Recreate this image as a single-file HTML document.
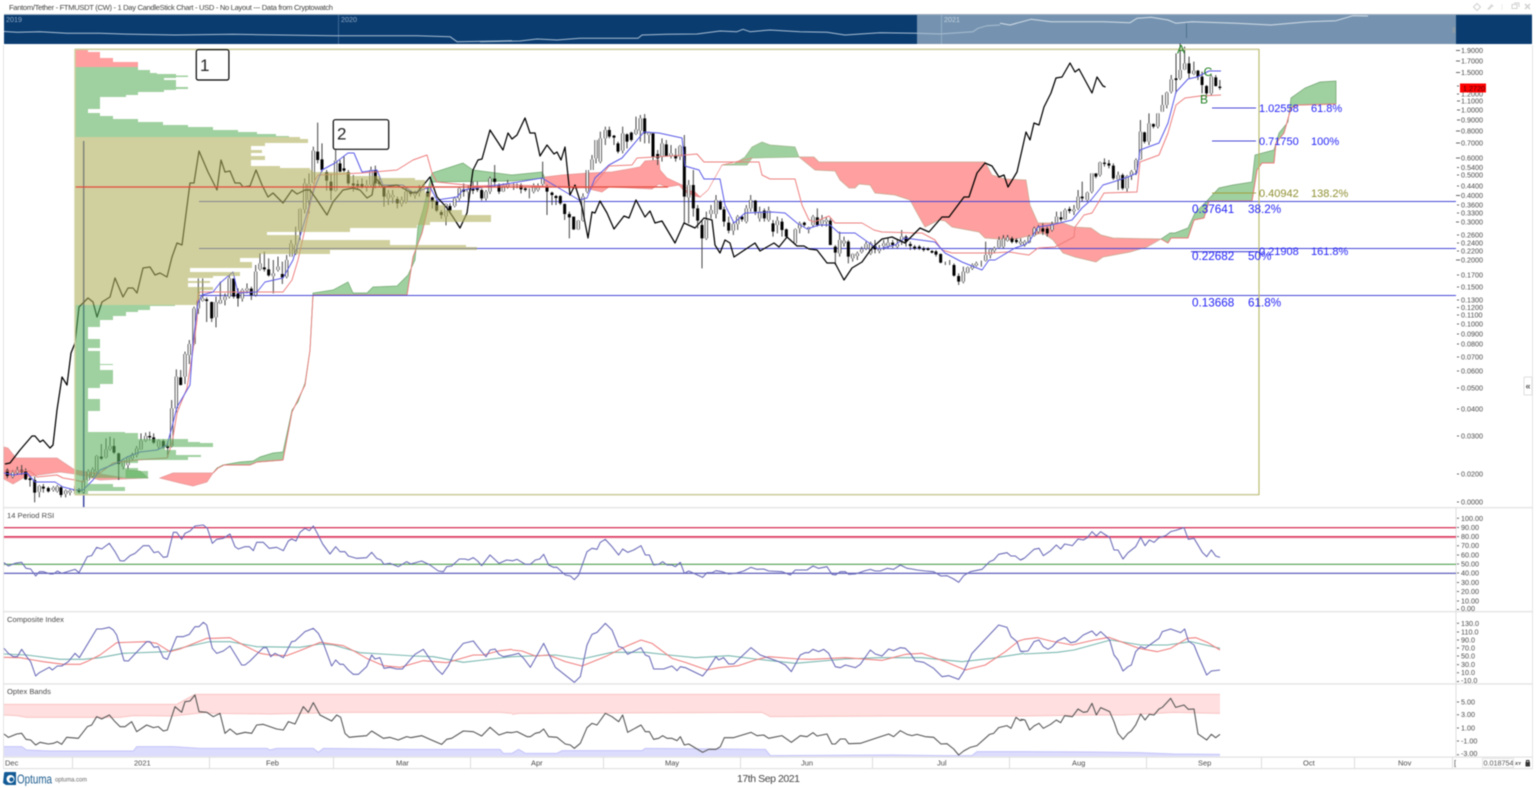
<!DOCTYPE html>
<html><head><meta charset="utf-8"><title>FTMUSDT</title>
<style>
html,body{margin:0;padding:0;background:#fff;overflow:hidden}
svg{display:block;font-family:"Liberation Sans",sans-serif}
#c{filter:blur(.4px)}
.a{font-size:7.2px;fill:#4a4a4a}
.m{font-size:7.5px;fill:#4a4a4a}
.f{font-size:11px;fill:#1f1ff5}
.g{font-size:11.7px;fill:#1f1ff5}
.o{font-size:11px;fill:#8e8e30}
.l{font-size:12px;fill:#1c7c1c;text-anchor:middle}
.n{fill:none;stroke-linejoin:round}
</style></head><body>
<svg id="c" width="1536" height="788" viewBox="0 0 1536 788" xmlns="http://www.w3.org/2000/svg">
<rect width="1536" height="788" fill="#fff"/>
<text x="9" y="10" font-size="7.6" fill="#444" textLength="324" lengthAdjust="spacing">Fantom/Tether - FTMUSDT (CW) - 1 Day CandleStick Chart - USD - No Layout --- Data from Cryptowatch</text>
<g fill="none" stroke="#d0d0d0" stroke-width="1"><path d="M1477 3.5l3.5 3.5-3.5 3.5-3.5-3.5z"/><path d="M1512 4.5h5v4h-5zM1514 3h5v4" /><path d="M1525 4l5 5M1530 4l-5 5" stroke-width="1.5"/></g>
<path d="M1487 9l3-3 1-2 3 2-2 1-3 3z" fill="#d8d8d8"/><path d="M1502 4v6" stroke="#eee"/>

<!-- navigator -->
<rect x="4" y="15" width="913" height="29" fill="#0a3c70"/><rect x="917" y="15" width="539" height="29" fill="#7593b0"/><rect x="1456" y="15" width="76" height="29" fill="#0a3c70"/>
<rect x="4" y="14" width="1528" height="1" fill="#9fb0c0"/>
<path d="M338.5 15V44" stroke="#3d6796"/><path d="M941.5 15V44" stroke="#93abc2"/>
<text x="6" y="22" font-size="7.2" fill="#8fa8c4">2019</text><text x="341" y="22" font-size="7.2" fill="#8fa8c4">2020</text><text x="944" y="22" font-size="7.2" fill="#c4d2e0">2021</text>
<g class="n" stroke="#a9bed2" stroke-width="1"><path d="M4 31.5L17 32.3L40 31.7L67 33.3L100 33.3L133 34.3L175 35L233 34.3L333 35.7L367 35.7L417 35.7L450 36.7L457 41.7L512 40.7"/>
<path d="M480 41.7L520 41L537 39L557 40L580 38.3L638 38.3L642 35L667 34.3L697 34L720 31L737 31.7L743 29.3L750 31.7L770 30L800 31.7L827 32.3L845 35L880 32.7L917 33.3L940 34L973 31.7L978 28.3L987 25.7L1000 25"/>
<path stroke="#d3dde7" d="M1000 23.3L1010 25L1031 19.3L1051 21.7L1103 21.7L1130 22.7L1137 18.3L1151 17.3L1168 20L1176 23.3L1192 21.7L1236 23.3L1271 25L1308 21.7L1336 20.7L1353 15.7L1368 16"/></g>
<path d="M1186.5 23V38" stroke="#4f6f90"/>
<rect x="1452.5" y="27" width="3" height="6" fill="#8a9aa8"/>

<!-- frame -->
<rect x="3" y="45" width="1" height="724" fill="#e4e4e4"/>
<rect x="1532" y="45" width="1" height="724" fill="#e4e4e4"/>
<rect x="1524" y="377" width="8" height="18" rx="1" fill="#fff" stroke="#ddd"/>
<text x="1525.5" y="389" font-size="9" fill="#555" font-weight="bold">«</text>

<!-- clouds -->
<g stroke="#9ab88a" stroke-width=".7">
<path fill="#ff9f9f" stroke="#e0a0a0" d="M4 447L8 448L16 458L57 458L75 470L100 474L125 478L148 478L100 480L75 474L60 472L25 477L13 484L4 479Z"/>
<path fill="#9fd09f" d="M126 470L140 471L148 478L126 478Z"/>
<path fill="#ff9f9f" stroke="#e89898" d="M160 478L173 473L213 473L207 482L193 486L180 483Z"/>
<path fill="#9fd09f" stroke="#6fa86f" d="M213 473L217 468L223 465L240 462L253 461L260 457L273 453L283 452L292 410L298 402L305 383L310 350L313 293L333 290L348 282L353 293L367 293L373 287L397 286L408 275L415 260L418 227L423 210L432 173L463 163L473 170L512 175L542 172L545 178L512 181L432 182L428 208L422 233L413 257L407 295L313 295L310 350L305 385L292 412L283 460L257 462L250 465L224 465L218 468Z"/>
<path class="n" stroke="#e87a7a" stroke-width=".9" d="M213 473L218 468L224 465L250 465L257 462L283 460L292 412L305 385L310 350L313 295L407 295L413 257L422 233L428 208L432 182"/>
<path fill="#ff9f9f" stroke="#e89090" d="M545 177L562 175L589 173L612 172L640 167L645 161L659 160L660 170L667 178L682 185L685 190L695 192L700 197L695 196L685 192L679 185L667 187L659 184L652 189L609 187L602 192L585 188L545 185Z"/>
<path fill="#9fd09f" d="M722 165L734 164L745 157L752 147L762 142L770 145L795 147L799 157L752 158L747 165Z"/>
<path class="n" stroke="#f08080" d="M682 185L700 197L708 190L722 165L752 158"/>
<path fill="#ff9f9f" stroke="#c8a890" d="M799 157L814 157L819 162L985 162L992 175L1005 179L1026 180L1030 205L1038 223L1063 223L1074 227L1091 228L1101 235L1113 238L1161 239L1147 247L1130 252L1103 257L1096 262L1075 257L1063 253L1053 240L1043 233L1024 237L1012 240L985 238L979 232L952 227L945 221L939 220L925 227L917 213L910 200L895 195L875 193L870 185L859 184L855 188L849 188L840 180L835 171L815 170Z"/>
<path fill="#9fd09f" stroke="#70a070" d="M1161 239L1170 233L1175 233L1188 228L1195 213L1205 203L1219 188L1233 185L1252 182L1255 155L1274 150L1279 133L1288 122L1291 98L1305 88L1320 82L1336 81L1336 104L1298 105L1291 108L1284 133L1276 143L1274 163L1262 163L1257 170L1252 201L1209 201L1204 218L1194 220L1188 238L1171 238L1168 243Z"/>
<path class="n" stroke="#ee7a7a" stroke-width="1" d="M1161 239L1168 243L1171 238L1188 238L1194 220L1204 218L1209 201L1252 201L1257 170L1262 163L1274 163L1276 143L1284 133L1291 108L1298 105L1336 104"/>
</g>

<!-- horizontal levels -->
<g stroke="#4646d8" stroke-width="1.1" fill="none"><path d="M199 201.5H1456M199 248.5H1456M199 295.5H1456"/><path d="M1212 108H1256M1212 141H1256M1191 251.7H1258"/></g>
<path d="M1212 193H1256" stroke="#a0a040"/>

<!-- vertical line -->
<path d="M83.7 141V507" stroke="#3a46a0" stroke-width="1.5"/>

<!-- candles group A (zoom 3 space) -->
<g transform="translate(0,260) scale(.33333)" fill="none">
<path stroke="#444" stroke-width="3" d="M22 625V655M38 630V655M52 620V645M65 615V645M77 625V660M90 650V680M104 650V727M118 675V712M130 672V698M145 680V698M160 678V695M172 675V698M183 678V712M197 688V712M210 688V706M224 678V702M237 684V700M250 660V700M265 628V662M278 622V652M290 585V640M304 552V600M318 535V595M330 530V572M342 535V582M356 578V660M370 595V628M384 588V628M397 578V602M410 558V592M423 520V570M437 518V546M449 515V542M461 520V552M476 538V566M490 538V566M503 545V592M515 420V562M529 328V457M542 330V376M555 275V372M568 240V312M582 140V256M595 55V162M608 55V125M620 112V186M635 125V186M648 110V202M661 65V132M675 100V136M688 45V115M701 55V116M714 85V140M727 85V125M741 70V100M754 80V120M767 15V110M780 -20V32M793 -25V35M806 -5V50M820 0V100M834 -10V35M847 5V72M860 -15V55"/>
<path stroke="#000" stroke-width="9" d="M22 630V648M65 630V636M77 632V658M90 655V660M104 660V698M130 680V686M145 684V694M183 682V705M224 688V692M237 688V696M304 590V596M342 558V578M356 580V612M449 528V532M461 532V548M490 543V562M503 558V564M542 352V375M620 118V123M635 126V175M701 56V110M714 100V115M754 86V105M793 22V28M806 28V46M847 42V52"/>
<path stroke="#444" stroke-width="10" d="M38 637V650M52 630V638M118 678V696M160 683V690M172 680V694M197 692V702M210 692V698M250 662V696M265 634V660M278 628V648M290 588V634M318 568V592M330 558V568M370 600V620M384 592V615M397 584V596M410 565V585M423 542V568M437 528V542M476 542V560M515 445V558M529 350V445M555 282V350M568 252V285M582 145V252M595 122V145M608 115V122M648 126V172M661 120V130M675 110V120M688 55V110M727 90V115M741 85V92M767 35V105M780 10V28M820 40V48M834 20V30M860 0V50"/>
<path stroke="#fff" stroke-width="5" d="M38 637V650M52 630V638M118 678V696M160 683V690M172 680V694M197 692V702M210 692V698M250 662V696M265 634V660M278 628V648M290 588V634M318 568V592M330 558V568M370 600V620M384 592V615M397 584V596M410 565V585M423 542V568M437 528V542M476 542V560M515 445V558M529 350V445M555 282V350M568 252V285M582 145V252M595 122V145M608 115V122M648 126V172M661 120V130M675 110V120M688 55V110M727 90V115M741 85V92M767 35V105M780 10V28M820 40V48M834 20V30M860 0V50"/>
</g>

<!-- candles group B (zoom 1 space) -->
<g transform="scale(.33333)" fill="none">
<path stroke="#444" stroke-width="3" d="M873 720V770M887 680V765M900 625V720M914 535V640M927 520V640M940 440V550M953 368V490M966 430V515M980 510V572M993 520V600M1007 450V575M1020 480V516M1032 470V516M1045 510V556M1060 525V575M1073 540V570M1086 535V565M1100 540V575M1113 500V560M1126 497V565M1138 535V560M1152 555V620M1165 570V615M1178 570V610M1192 590V625M1205 590V620M1218 560V610M1232 570V590M1245 572V596M1258 555V590M1283 560V592M1297 590V626M1310 600V636M1324 630V656M1338 610V676M1350 610V640M1364 590V622M1378 560V602M1391 550V590M1405 555V602M1419 545V582M1432 545V576M1445 565V602M1458 570V602M1470 530V582M1484 495V562M1497 550V582M1510 550V576M1523 540V566"/>
<path stroke="#000" stroke-width="9" d="M953 455V480M966 478V510M980 516V542M993 545V572M1020 490V515M1032 505V512M1045 516V550M1060 550V557M1073 552V558M1086 552V560M1126 510V550M1138 545V552M1152 560V590M1192 597V610M1232 574V582M1283 575V590M1297 592V605M1310 605V632M1324 636V645M1350 618V632M1391 568V575M1419 565V572M1432 565V570M1445 570V595M1484 536V546M1497 555V575"/>
<path stroke="#444" stroke-width="10" d="M873 730V770M887 735V760M900 627V690M914 550V628M927 552V600M940 452V548M1007 482V572M1100 555V562M1113 510V555M1165 580V595M1178 585V592M1205 600V612M1218 575V605M1245 578V586M1258 570V578M1338 612V650M1364 595V618M1378 565V595M1405 566V576M1458 575V595M1470 535V575M1510 558V574M1523 552V562"/>
<path stroke="#fff" stroke-width="5" d="M873 730V770M887 735V760M900 627V690M914 550V628M927 552V600M940 452V548M1007 482V572M1100 555V562M1113 510V555M1165 580V595M1178 585V592M1205 600V612M1218 575V605M1245 578V586M1258 570V578M1338 612V650M1364 595V618M1378 565V595M1405 566V576M1458 575V595M1470 535V575M1510 558V574M1523 552V562"/>
</g>

<!-- candles group C (zoom 4 space) -->
<g transform="translate(512,90) scale(.33333)" fill="none">
<path stroke="#444" stroke-width="3" d="M5 280V300M15 280V295M27 280V310M40 290V305M52 295V325M65 280V310M78 280V305M92 215V290M105 285V375M120 305V345M132 315V345M145 315V345M158 340V390M172 365V445M185 380V420M199 390V420M213 310V395M226 240V310M240 195V240M252 150V220M265 125V220M280 110V165M292 110V145M306 135V165M318 155V190M332 110V190M345 130V175M358 125V155M372 80V135M385 75V155M398 72V160M411 125V160M423 130V210M437 180V225M450 145V215M463 150V200M477 165V205M491 175V215M504 165V210M517 135V400M530 270V400M544 240V380M557 345V415M570 390V535M583 365V450M597 345V385M612 315V385M625 330V360M636 350V410M650 380V430M664 395V435M677 375V420M690 375V395M703 345V400M716 315V365M730 330V375M743 350V395M757 355V395M770 350V395M783 390V440M796 380V430M810 385V440M823 415V445M850 415V465M863 395V430M877 395V410M890 410V430M903 375V410M916 355V410M930 375V410M943 380V410M955 385V465M970 465V525M983 425V500M996 440V470M1009 450V520M1022 490V515M1036 485V510M1049 470V490M1062 455V480M1076 455V495M1089 450V490M1102 465V490M1115 450V480M1128 445V475M1142 450V475M1156 450V475M1169 420V465M1182 435V470M1195 455V480M1208 465V480M1222 465V480M1235 470V485M1248 472V482M1260 480V490M1272 480V500M1286 490V520M1300 515V525M1313 510V525M1326 520V560M1340 550V585M1354 530V580M1367 530V550M1381 520V540M1393 515V530M1408 512V530M1421 455V515M1435 475V505M1447 470V490M1461 440V475M1474 440V455M1487 435V450M1500 440V455M1513 445V460M1526 445V465"/>
<path stroke="#000" stroke-width="9" d="M27 285V298M40 295V300M105 290V305M120 308V315M132 318V324M145 318V340M158 342V372M172 372V382M185 380V418M292 120V140M306 137V143M318 160V185M345 133V155M358 128V150M398 85V130M423 130V200M437 192V205M463 163V198M491 195V205M517 170V320M544 285V355M557 355V392M570 405V445M625 335V358M636 358V395M650 398V422M690 380V388M730 332V365M757 362V385M783 400V425M810 395V420M823 418V440M877 398V405M916 382V405M955 392V465M970 470V488M1009 455V500M1089 468V478M1142 458V465M1182 440V455M1195 462V468M1208 470V476M1222 470V476M1235 475V480M1248 475V480M1260 483V488M1272 484V494M1286 492V518M1326 525V557M1340 558V575M1500 445V450"/>
<path stroke="#444" stroke-width="10" d="M65 288V305M78 290V300M92 265V282M199 392V418M213 320V392M226 240V305M240 208V240M252 150V205M265 145V215M280 120V145M332 130V182M372 118V132M385 85V122M411 128V135M450 160V200M477 190V198M504 168V200M530 285V322M583 390V445M597 360V372M612 330V372M664 402V422M677 380V402M703 355V395M716 330V355M743 365V385M770 362V390M796 392V405M850 418V460M863 400V415M890 412V418M903 380V405M930 390V402M943 390V395M983 450V490M996 452V460M1022 492V505M1036 490V498M1049 478V486M1062 462V475M1076 460V490M1102 475V483M1115 460V468M1128 458V468M1156 462V470M1169 440V450M1354 545V575M1367 533V548M1381 525V535M1393 520V526M1421 495V512M1435 478V495M1447 475V482M1461 450V472"/>
<path stroke="#fff" stroke-width="5" d="M65 288V305M78 290V300M92 265V282M199 392V418M213 320V392M226 240V305M240 208V240M252 150V205M265 145V215M280 120V145M332 130V182M372 118V132M385 85V122M411 128V135M450 160V200M477 190V198M504 168V200M530 285V322M583 390V445M597 360V372M612 330V372M664 402V422M677 380V402M703 355V395M716 330V355M743 365V385M770 362V390M796 392V405M850 418V460M863 400V415M890 412V418M903 380V405M930 390V402M943 390V395M983 450V490M996 452V460M1022 492V505M1036 490V498M1049 478V486M1062 462V475M1076 460V490M1102 475V483M1115 460V468M1128 458V468M1156 462V470M1169 440V450M1354 545V575M1367 533V548M1381 525V535M1393 520V526M1421 495V512M1435 478V495M1447 475V482M1461 450V472"/>
</g>

<!-- candles group D (zoom 2 space) -->
<g transform="translate(1000,0) scale(.34247,.33333)" fill="none">
<path stroke="#444" stroke-width="3" d="M10 705V745M22 705V725M35 715V730M48 715V730M60 720V735M72 720V740M85 705V730M100 680V710M112 675V700M125 670V705M138 680V710M152 665V695M165 635V670M178 635V665M190 625V660M203 620V640M216 615V645M228 570V630M240 545V605M255 575V605M268 520V580M280 520V535M292 485V530M305 475V500M318 480V505M331 490V540M345 515V570M358 520V570M371 525V575M384 510V540M397 475V525M410 360V480M422 395V430M435 340V435M448 370V385M461 340V385M474 285V335M487 275V325M500 225V280M514 160V280M526 130V240M539 140V210M552 170V235M566 185V225M578 210V240M590 215V280M603 255V285M617 225V285M630 225V260M642 240V270"/>
<path stroke="#000" stroke-width="8.5" d="M35 718V726M48 720V726M125 685V695M138 686V700M178 652V658M203 627V633M240 590V595M280 520V530M305 488V492M318 490V497M331 497V535M358 525V565M422 397V425M448 372V380M514 235V240M552 190V220M578 212V230M590 230V255M603 258V280M630 232V258M642 260V264"/>
<path stroke="#444" stroke-width="9.5" d="M10 715V740M22 712V722M60 725V730M72 725V735M85 710V728M100 685V707M112 682V695M152 672V690M165 650V668M190 630V658M216 628V634M228 590V625M255 578V600M268 520V575M292 487V525M345 525V538M371 528V565M384 515V525M397 480V510M410 395V478M435 370V425M461 340V380M474 315V335M487 278V315M500 238V275M526 210V235M539 190V208M566 212V222M617 230V280"/>
<path stroke="#fff" stroke-width="4.7" d="M10 715V740M22 712V722M60 725V730M72 725V735M85 710V728M100 685V707M112 682V695M152 672V690M165 650V668M190 630V658M216 628V634M228 590V625M255 578V600M268 520V575M292 487V525M345 525V538M371 528V565M384 515V525M397 480V510M410 395V478M435 370V425M461 340V380M474 315V335M487 278V315M500 238V275M526 210V235M539 190V208M566 212V222M617 230V280"/>
</g>

<!-- kijun -->
<path class="n" stroke="#ee7f7f" stroke-width="1" d="M4 471L30 471L37 477L57 475L63 478L75 480L83 482L90 473L100 473L113 463L137 460L167 458L172 443L177 413L187 388L193 350L197 320L198 295L200 292L283 292L292 280L298 260L307 220L315 180L318 175L362 173L397 170L413 160L427 155L432 173L437 182L475 186L512 185L540 186L575 188L592 187L609 166L632 165L637 158L655 157L685 155L697 154L704 162L759 162L762 175L770 179L795 179L802 205L809 220L814 222L829 216L835 223L862 223L874 230L882 232L915 233L922 233L935 240L942 250L952 253L992 253L1009 252L1029 255L1038 248L1055 247L1074 237L1075 227L1084 215L1092 213L1104 193L1137 192L1140 162L1159 155L1168 133L1176 105L1185 98L1200 96L1221 95"/>
<!-- tenkan -->
<path class="n" stroke="#5a5ae8" stroke-width="1" d="M4 473L13 475L27 473L35 482L55 482L63 487L75 490L83 490L93 480L100 470L117 463L127 457L140 452L157 450L167 445L172 427L177 407L190 385L193 343L198 303L202 295L213 292L220 283L233 272L238 293L257 292L265 282L283 278L293 260L302 230L310 203L315 187L322 170L335 163L348 153L354 153L362 172L377 170L383 185L403 185L413 193L430 187L437 200L457 197L463 190L512 183L542 178L579 200L587 198L595 178L609 165L622 158L644 132L659 133L682 138L685 166L699 170L704 179L720 179L725 205L734 223L745 213L772 212L785 213L797 223L807 229L819 225L830 225L839 233L855 233L872 245L879 249L895 245L905 238L935 242L945 253L962 262L982 270L989 260L995 260L1015 248L1024 245L1029 242L1038 227L1051 225L1072 220L1082 208L1091 200L1103 185L1113 182L1128 177L1137 173L1140 150L1159 143L1168 123L1176 92L1188 79L1197 77L1209 71L1221 71"/>
<!-- lagging span -->
<path class="n" stroke="#000" stroke-width="1.25" d="M5 464L10 463L20 450L32 436L35 436L40 442L43 440L50 448L53 445L57 410L62 377L67 385L71 353L75 343L79 307L88 298L93 302L97 317L102 302L110 297L115 278L123 297L128 288L133 288L137 293L143 268L150 267L155 275L160 273L167 277L172 257L177 243L182 245L190 183L194 183L199 151L208 172L217 190L221 160L225 172L230 171L235 183L240 183L243 187L250 186L256 170L262 185L268 197L273 193L283 203L292 190L297 194L305 190L310 190L317 200L327 215L333 202L343 190L353 188L360 190L367 198L372 195L375 177L383 187L397 185L410 192L417 193L430 177L437 197L447 208L453 217L460 228L467 213L473 170L478 160L482 159L490 130L503 150L508 133L512 139L517 135L525 118L530 133L535 133L540 156L547 145L554 154L557 152L561 160L565 147L570 195L575 185L582 207L588 238L592 212L595 213L600 201L607 213L614 229L624 216L629 218L636 200L645 217L650 211L655 223L662 221L675 243L684 223L695 228L704 218L712 220L715 245L720 253L725 240L730 243L734 257L755 243L760 251L774 243L779 247L787 237L797 246L804 246L809 249L817 250L827 263L835 263L844 280L852 268L862 262L872 248L882 239L892 237L905 243L915 233L920 228L929 232L942 217L949 217L964 197L969 197L977 173L985 163L992 166L999 177L1004 175L1008 187L1017 172L1022 150L1026 132L1030 140L1034 123L1039 125L1044 107L1051 93L1056 78L1062 77L1070 63L1075 72L1079 69L1092 93L1097 77L1103 86L1105.5 87"/>

<!-- volume profile overlay -->
<path fill="#ff5f5f" fill-opacity=".6" d="M75 49H88V52H100V58H113V62H138V67H75Z"/>
<path fill="#5fb15f" fill-opacity=".6" d="M75 67H138V70H150V73H157V74H176V75.5H188V77H176V78H164V80H176V87H188V89H176V90H164V92H138V95H126V97H100V109H88V113H100V116H113V119H138V122H163V125H188V127H213V130H238V132H257V134H276V136H289V137H75Z"/>
<path fill="#b1b15f" fill-opacity=".6" d="M75 137H300V139H308V143H265V146H251V150H262V153H251V156H265V160H251V166H280V168H310V170H313V172H350V176H380V178H415V180H425V193H430V200H436V205H445V210H462V215H491V222H430V225H417V228H350V232H267V235H300V240H390V245H466V247H477V250H330V254H260V258H240V262H252V268H190V272H240V276H213V278H188V281H210V283H188V287H213V290H200V300H197V305H75Z"/>
<path fill="#5fb15f" fill-opacity=".6" d="M75 305H175V306H150V310H138V312H126V316H113V320H100V327H88V339H100V348H88V351H100V364H113V365H100V370H113V384H100V388H88V399H100V411H88V432H125V433H138V439H188V442H200V443H213V447H165V450H176V455H201V457H188V460H138V463H125V468H138V471H148V478H88V484H113V487H125V491H88V495H75Z"/>

<!-- box frame + lines on top -->
<path d="M75 187H668" stroke="#e24a3c" stroke-width="1.3"/>
<path d="M75 49.3H1259M75 494.7H1259" stroke="#cfcf9f" stroke-width="1.7" fill="none"/>
<path d="M75 49V495" stroke="#cfcf9f" stroke-width="1.4"/>
<path d="M1259 49V495" stroke="#b8b868" stroke-width="1.1"/>
<rect x="196.3" y="49.7" width="32.6" height="30.3" rx="2" fill="#fff" stroke="#000" stroke-width="1.2"/>
<text x="200" y="71" font-size="17" fill="#222">1</text>
<rect x="333.3" y="119.7" width="55.4" height="29.6" rx="2" fill="#fff" stroke="#000" stroke-width="1.2"/>
<text x="337" y="139.5" font-size="17" fill="#222">2</text>

<!-- fib labels -->
<text class="f" x="1259" y="112">1.02558</text><text class="f" x="1311" y="112">61.8%</text>
<text class="f" x="1259" y="145">0.71750</text><text class="f" x="1311" y="145">100%</text>
<text class="o" x="1259" y="197">0.40942</text><text class="o" x="1311" y="197">138.2%</text>
<text class="f" x="1259" y="255">0.21908</text><text class="f" x="1311" y="255">161.8%</text>
<text class="g" x="1192" y="213">0.37641</text><text class="g" x="1248" y="213">38.2%</text>
<text class="g" x="1192" y="260">0.22682</text><text class="g" x="1248" y="260">50%</text>
<text class="g" x="1192" y="306.5">0.13668</text><text class="g" x="1248" y="306.5">61.8%</text>
<text class="l" x="1181" y="53.5">A</text><text class="l" x="1208" y="76">C</text><text class="l" x="1204" y="103.5">B</text>

<!-- axis main -->
<path d="M1456 507V757" stroke="#ddd"/>
<path stroke="#666" d="M1456 50.5h4M1456 61h4M1456 72.5h4M1457 94h2M1457 86h2M1457 101h3M1457 110h3M1457 120h3M1456 131h4M1456 143h4M1456 158h4M1457 167.5h2M1457 175h2M1457 186h2M1456 195.5h4M1457 205h2M1457 213h2M1456 222h3M1457 235h2M1457 243h2M1457 251h2M1456 260h4M1457 275h2M1457 287h2M1457 300h2M1457 307.5h2M1457 315h2M1457 324h2M1457 334h2M1457 344h2M1457 357h2M1457 371h2M1457 388h2M1457 409h2M1457 436h2M1457 474h2M1457 502h2"/>
<g class="a">
<text x="1461" y="53">1.9000</text><text x="1461" y="63.5">1.7000</text><text x="1461" y="75">1.5000</text><text x="1461" y="96.5">1.2000</text><text x="1461" y="103.5">1.1000</text><text x="1461" y="112.5">1.0000</text><text x="1461" y="122.5">0.9000</text><text x="1461" y="133.5">0.8000</text><text x="1461" y="145.5">0.7000</text><text x="1461" y="160.5">0.6000</text><text x="1461" y="170">0.5400</text><text x="1461" y="177.5">0.5000</text><text x="1461" y="188.5">0.4400</text><text x="1461" y="198">0.4000</text><text x="1461" y="207.5">0.3600</text><text x="1461" y="215.5">0.3300</text><text x="1461" y="224.5">0.3000</text><text x="1461" y="237.5">0.2600</text><text x="1461" y="245.5">0.2400</text><text x="1461" y="253.5">0.2200</text><text x="1461" y="262.5">0.2000</text><text x="1461" y="277.5">0.1700</text><text x="1461" y="289.5">0.1500</text><text x="1461" y="302.5">0.1300</text><text x="1461" y="310">0.1200</text><text x="1461" y="317.5">0.1100</text><text x="1461" y="326.5">0.1000</text><text x="1461" y="336.5">0.0900</text><text x="1461" y="346.5">0.0800</text><text x="1461" y="359.5">0.0700</text><text x="1461" y="373.5">0.0600</text><text x="1461" y="390.5">0.0500</text><text x="1461" y="411.5">0.0400</text><text x="1461" y="438.5">0.0300</text><text x="1461" y="476.5">0.0200</text><text x="1461" y="504.5">0.0000</text>
</g>
<rect x="1460" y="83.5" width="26" height="9" fill="#f00"/>
<text x="1463" y="91" font-size="7.2" fill="#500">1.2720</text>

<!-- panel separators -->
<g fill="#e2e2e2"><rect x="3" y="507" width="1530" height="1.3"/><rect x="3" y="611" width="1530" height="1.3"/><rect x="3" y="683.3" width="1530" height="1.3"/><rect x="3" y="756.5" width="1530" height="1.2"/><rect x="3" y="768" width="1530" height="1.2"/></g>
<text x="7" y="518" font-size="7.6" fill="#4a4a4a">14 Period RSI</text>
<text x="7" y="622" font-size="7.6" fill="#4a4a4a">Composite Index</text>
<text x="7" y="694" font-size="7.6" fill="#4a4a4a">Optex Bands</text>

<!-- RSI -->
<g stroke-width="1.1"><path d="M4 537.6H1456" stroke="#f2a8b8" stroke-width="1.6"/><path d="M4 527.7H1456" stroke="#d31440"/><path d="M4 536.7H1456" stroke="#d31440"/><path d="M4 564.3H1456" stroke="#4e9e4e"/><path d="M4 573.3H1456" stroke="#4c4cb4"/></g>
<g class="n" transform="translate(0,505) scale(.33333)" stroke="#6a6ab8" stroke-width="3.2"><path d="M12 173L25 183L45 175L65 172L78 190L92 192L107 213L118 200L130 200L150 207L160 207L172 198L185 205L225 193L237 203L262 155L275 152L290 127L305 132L328 115L345 140L360 167L372 168L390 152L405 145L430 122L447 122L462 143L475 140L490 157L502 155L520 82L530 82L545 103L555 85L570 78L585 63L610 60L622 70L637 115L650 103L670 100L690 87L705 125L715 132L735 125L748 125L760 137L770 112L790 112L808 130L830 127L850 137L865 108L875 102L888 108L900 82L915 70L928 77L940 63L952 85L968 117L990 147L1007 125L1020 140L1035 140L1045 153L1070 160L1100 158L1115 142L1130 160L1143 165L1152 178L1170 175L1195 185L1220 170L1232 177L1265 168L1290 180L1315 198L1330 200L1340 185L1355 183L1378 162L1395 162L1405 165L1420 158L1433 168L1445 182L1470 150L1497 175L1520 165L1536 167"/></g>
<g class="n" transform="translate(512,505) scale(.33333)" stroke="#6a6ab8" stroke-width="3.2"><path d="M0 168L15 163L40 178L55 178L70 165L83 162L95 148L110 180L125 187L135 187L160 210L175 213L187 224L200 210L225 140L240 130L255 133L265 112L280 103L300 125L320 150L332 132L347 142L365 135L387 122L400 150L412 150L425 180L440 178L452 170L465 180L480 180L490 185L505 172L517 205L530 198L572 217L585 203L600 203L612 197L630 200L650 207L670 205L695 198L717 187L735 193L755 192L770 198L810 200L835 210L850 195L885 195L903 183L920 190L945 185L960 208L970 210L985 200L1000 200L1010 208L1030 207L1060 197L1075 193L1090 198L1105 198L1125 190L1145 193L1165 180L1185 190L1200 192L1215 195L1240 198L1265 200L1287 213L1305 212L1325 222L1340 232L1355 212L1375 200L1410 193L1433 170L1445 165L1460 148L1485 143L1497 153L1510 153L1525 165L1536 160"/></g>
<g class="n" transform="translate(1024,505) scale(.33333)" stroke="#6a6ab8" stroke-width="3.2"><path d="M-10 165L3 158L30 133L45 130L58 152L80 137L97 120L110 132L122 117L145 122L162 102L178 105L190 98L204 80L217 93L230 80L245 90L257 97L270 135L282 135L297 162L312 143L335 125L350 97L363 122L376 105L390 112L405 98L425 92L440 80L455 76L480 68L493 103L510 100L535 142L548 155L562 135L575 153L588 157"/></g>
<path stroke="#666" d="M1457 518.3h2M1457 527.5h2M1457 536.6h2M1457 545.7h2M1457 555h2M1457 564h2M1457 573h2M1457 582.5h2M1457 591.5h2M1457 601h2M1457 609.5h2M1457 623.3h2M1457 632h2M1457 640h2M1457 648h2M1457 656h2M1457 664.6h2M1457 672.7h2M1457 681.5h2M1457 702h2M1457 714.7h2M1457 728h2M1457 741h2M1457 754.7h2"/>
<g class="a"><text x="1461" y="520.8">100.00</text><text x="1461" y="530">90.00</text><text x="1461" y="539.1">80.00</text><text x="1461" y="548.2">70.00</text><text x="1461" y="557.5">60.00</text><text x="1461" y="566.5">50.00</text><text x="1461" y="575.5">40.00</text><text x="1461" y="585">30.00</text><text x="1461" y="594">20.00</text><text x="1461" y="603.5">10.00</text><text x="1461" y="611">0.00</text>
<text x="1461" y="625.8">130.0</text><text x="1461" y="634.5">110.0</text><text x="1461" y="642.5">90.0</text><text x="1461" y="650.5">70.0</text><text x="1461" y="658.5">50.0</text><text x="1461" y="667">30.0</text><text x="1461" y="675.2">10.0</text><text x="1461" y="682.8">-10.0</text>
<text x="1461" y="704.5">5.00</text><text x="1461" y="717.2">3.00</text><text x="1461" y="730.5">1.00</text><text x="1461" y="743.5">-1.00</text><text x="1461" y="756">-3.00</text></g>

<!-- composite -->
<g class="n" transform="translate(0,505) scale(.33333)" stroke-width="3.2">
<path stroke="#7ab8b0" d="M12 447L80 450L180 463L250 463L300 458L370 445L500 440L560 425L630 410L690 410L770 425L900 427L960 417L1000 420L1080 443L1240 453L1300 455L1390 472L1450 465L1536 455"/>
<path stroke="#f08080" d="M12 457L60 458L100 465L130 470L190 478L240 478L260 470L300 450L350 413L440 410L470 415L510 440L540 432L620 400L640 400L690 398L730 420L780 445L810 450L860 452L900 437L960 412L1030 422L1060 437L1100 460L1150 482L1200 487L1270 467L1340 473L1420 450L1450 450L1500 437L1536 433"/>
<path stroke="#6a6ab8" d="M12 430L25 445L40 455L52 455L65 433L80 455L92 470L107 513L118 503L148 487L157 495L172 483L185 483L205 470L225 445L238 458L290 372L305 372L328 367L340 375L350 390L372 467L385 468L440 410L450 410L462 427L475 425L490 458L502 463L530 395L550 395L568 388L585 365L597 365L610 352L620 360L637 430L650 445L670 438L690 423L725 480L735 480L750 468L790 428L800 428L812 455L825 445L850 458L875 410L885 408L915 380L940 370L955 385L970 415L995 483L1007 465L1020 478L1030 478L1045 495L1060 508L1075 508L1100 485L1115 450L1125 462L1140 458L1152 490L1170 487L1190 492L1207 492L1230 465L1245 448L1270 433L1285 455L1310 492L1327 508L1345 483L1360 450L1390 415L1420 408L1433 425L1445 440L1458 455L1470 435L1485 432L1497 448L1510 455L1536 450"/>
</g>
<g class="n" transform="translate(512,505) scale(.33333)" stroke-width="3.2">
<path stroke="#7ab8b0" d="M0 455L130 450L210 462L300 442L400 442L470 450L550 458L650 452L730 462L850 475L1000 462L1100 458L1230 458L1350 470L1440 460L1536 445"/>
<path stroke="#f08080" d="M0 435L30 438L70 453L110 450L160 470L210 483L280 455L340 425L387 405L420 415L480 460L520 472L585 495L620 488L680 482L730 465L770 455L860 462L900 463L1000 458L1110 466L1180 448L1230 445L1300 470L1360 495L1420 480L1480 440L1520 408L1536 403"/>
<path stroke="#6a6ab8" d="M0 450L20 445L35 460L55 487L95 415L130 487L187 532L205 515L225 420L240 388L255 382L280 355L300 375L320 425L332 428L347 448L387 428L400 450L412 455L425 492L455 492L480 483L495 497L505 485L520 488L572 513L590 490L612 455L620 465L635 458L650 477L665 477L717 428L745 450L800 470L820 480L838 500L865 450L880 443L890 443L903 433L920 440L935 433L950 445L970 485L985 488L1000 480L1030 488L1045 478L1075 435L1090 447L1110 453L1130 432L1145 437L1165 428L1180 430L1195 445L1210 468L1235 472L1265 490L1290 515L1310 512L1340 523L1355 500L1380 445L1460 360L1485 367L1497 395L1515 410L1525 438L1536 440"/>
</g>
<g class="n" transform="translate(1024,505) scale(.33333)" stroke-width="3.2">
<path stroke="#7ab8b0" d="M0 447L100 442L150 435L260 405L350 420L430 420L500 410L588 430"/>
<path stroke="#f08080" d="M0 403L40 398L80 408L145 420L210 405L255 397L290 410L345 430L400 440L440 430L490 400L515 398L550 412L588 435"/>
<path stroke="#6a6ab8" d="M-10 440L12 438L30 410L45 405L58 425L72 433L85 425L100 408L122 398L140 413L155 410L178 390L204 378L217 392L230 380L257 405L270 450L282 465L297 498L312 485L322 480L335 440L350 425L363 430L405 400L415 380L440 372L470 383L482 372L493 408L510 420L522 450L548 510L562 498L588 495"/>
</g>

<!-- optex bands (fills without seams, edges as separate open strokes) -->
<g transform="translate(0,505) scale(.33333)">
<path fill="#ffdfdf" d="M12 598L530 598L585 568L1537 568L1537 625L1500 622L1290 622L1040 622L810 627L640 625L620 622L590 625L520 633L400 632L360 637L80 637L50 632L12 630Z"/>
<path fill="#dcdcfc" d="M12 725L65 725L80 735L150 738L400 738L410 725L520 725L600 730L800 730L810 735L830 730L940 730L955 742L970 730L1240 733L1500 733L1510 745L1537 745L1537 754L12 754Z"/>
<path class="n" stroke="#f9c4c4" stroke-width="3" d="M12 598L530 598L585 568L1536 568M1536 625L1500 622L1290 622L1040 622L810 627L640 625L620 622L590 625L520 633L400 632L360 637L80 637L50 632L12 630"/>
<path class="n" stroke="#c4c4fa" stroke-width="3" d="M12 725L65 725L80 735L150 738L400 738L410 725L520 725L600 730L800 730L810 735L830 730L940 730L955 742L970 730L1240 733L1500 733L1510 745L1536 745"/>
</g>
<g transform="translate(512,505) scale(.33333)">
<path fill="#ffdfdf" d="M0 568L1537 568L1537 633L1140 633L775 635L750 622L20 625L0 628Z"/>
<path fill="#dcdcfc" d="M0 745L20 733L40 745L135 745L150 737L390 737L400 730L760 733L775 752L1140 750L1290 752L1380 752L1395 740L1537 740L1537 754L0 754Z"/>
<path class="n" stroke="#f9c4c4" stroke-width="3" d="M0 568L1536 568M1536 633L1140 633L775 635L750 622L20 625L0 628"/>
<path class="n" stroke="#c4c4fa" stroke-width="3" d="M0 745L20 733L40 745L135 745L150 737L390 737L400 730L760 733L775 752L1140 750L1290 752L1380 752L1395 740L1536 740"/>
</g>
<g transform="translate(1024,505) scale(.33333)">
<path fill="#ffdfdf" d="M0 568L588 568L588 625L450 622L300 630L200 630L0 633Z"/>
<path fill="#dcdcfc" d="M0 740L200 741L350 743L450 747L588 748L588 754L0 754Z"/>
<path class="n" stroke="#f9c4c4" stroke-width="3" d="M0 568L588 568M588 625L450 622L300 630L200 630L0 633"/>
<path class="n" stroke="#c4c4fa" stroke-width="3" d="M0 740L200 741L350 743L450 747L588 748"/>
</g>
<g class="n" stroke="#555" stroke-width="3.2">
<path transform="translate(0,505) scale(.33333)" d="M12 687L25 697L50 687L65 685L78 703L92 705L107 720L120 712L145 717L160 715L172 710L185 718L200 697L235 700L262 665L275 660L290 635L305 642L328 630L345 650L360 665L375 665L395 650L410 680L440 660L460 668L475 665L490 678L502 675L525 605L545 622L555 590L570 588L585 570L597 620L620 622L640 635L660 625L675 685L690 672L710 688L735 682L755 685L770 660L790 658L830 672L850 675L865 650L885 657L910 605L925 622L940 593L960 630L995 648L1010 630L1022 637L1035 685L1048 697L1065 695L1100 692L1115 678L1150 700L1170 697L1195 705L1220 695L1232 698L1265 692L1290 703L1325 718L1340 703L1355 700L1390 678L1420 680L1445 693L1470 667L1497 690L1520 682L1536 683"/>
<path transform="translate(512,505) scale(.33333)" d="M0 683L15 680L45 695L55 695L70 685L83 682L95 672L110 695L135 697L160 717L175 720L187 730L205 715L225 668L240 655L255 660L280 625L300 635L320 650L332 630L347 682L387 660L400 680L412 680L425 703L440 700L452 692L465 700L480 700L495 707L505 695L517 720L530 717L572 742L590 733L612 733L625 725L637 698L665 698L717 682L735 692L755 690L770 700L810 692L838 712L865 692L885 695L903 683L915 693L945 687L960 717L970 717L985 702L1000 702L1010 716L1045 715L1090 700L1130 687L1145 695L1165 677L1185 688L1200 692L1215 688L1240 695L1265 697L1287 717L1305 716L1325 732L1340 750L1355 738L1375 727L1395 722L1433 688L1445 685L1460 668L1485 662L1497 670L1512 637L1525 647L1536 643"/>
<path transform="translate(1024,505) scale(.33333)" d="M-10 643L3 645L17 675L30 663L45 655L58 670L80 658L97 645L110 653L122 632L145 635L162 612L178 622L190 620L204 595L217 630L230 608L257 620L270 650L282 685L297 703L312 685L322 678L335 660L350 627L363 645L376 628L390 630L405 612L415 607L440 580L455 607L480 600L493 613L510 612L522 687L548 705L562 688L575 698L588 688"/>
</g>

<!-- x axis -->
<path stroke="#ddd" d="M72.5 757V768M209.5 757V768M333.5 757V768M470.5 757V768M603.5 757V768M740.5 757V768M872.5 757V768M1009.5 757V768M1146.5 757V768M1261.5 757V768M1354.5 757V768M1452.5 757V768"/>
<g class="m"><text x="5" y="765.5">Dec</text><text x="134" y="765.5">2021</text><text x="266" y="765.5">Feb</text><text x="396" y="765.5">Mar</text><text x="531" y="765.5">Apr</text><text x="665" y="765.5">May</text><text x="801" y="765.5">Jun</text><text x="937" y="765.5">Jul</text><text x="1072" y="765.5">Aug</text><text x="1198" y="765.5">Sep</text><text x="1303" y="765.5">Oct</text><text x="1398" y="765.5">Nov</text><text x="1454" y="765.5">[</text></g>
<rect x="1482.5" y="758.5" width="31" height="9" fill="#fff" stroke="#e4e4e4"/>
<svg x="1483" y="758" width="30" height="10"><text x="0.5" y="7.6" font-size="7.2" fill="#555">0.0187544</text></svg>
<text x="1515" y="765" font-size="4.6" font-weight="bold" fill="#444">XY</text>
<rect x="1525.5" y="762" width="4.5" height="4.5" fill="#333"/><path d="M1526.5 762V760.5h2.5V762" fill="none" stroke="#333"/>

<!-- footer -->
<path d="M4 773.5Q4 772 5.5 772H16V785H6L3 783Z" fill="#125a96"/>
<circle cx="10.5" cy="779" r="4" fill="#fff"/><circle cx="11.5" cy="779.5" r="2.2" fill="#125a96"/>
<text x="17" y="783.5" font-size="12.5" fill="#1b5c8e" textLength="35" lengthAdjust="spacingAndGlyphs">Optuma</text>
<text x="55" y="781.5" font-size="6" fill="#666" textLength="32" lengthAdjust="spacingAndGlyphs">optuma.com</text>
<text x="737" y="782" font-size="10.5" fill="#444" textLength="63" lengthAdjust="spacing">17th Sep 2021</text>
</svg>
</body></html>
